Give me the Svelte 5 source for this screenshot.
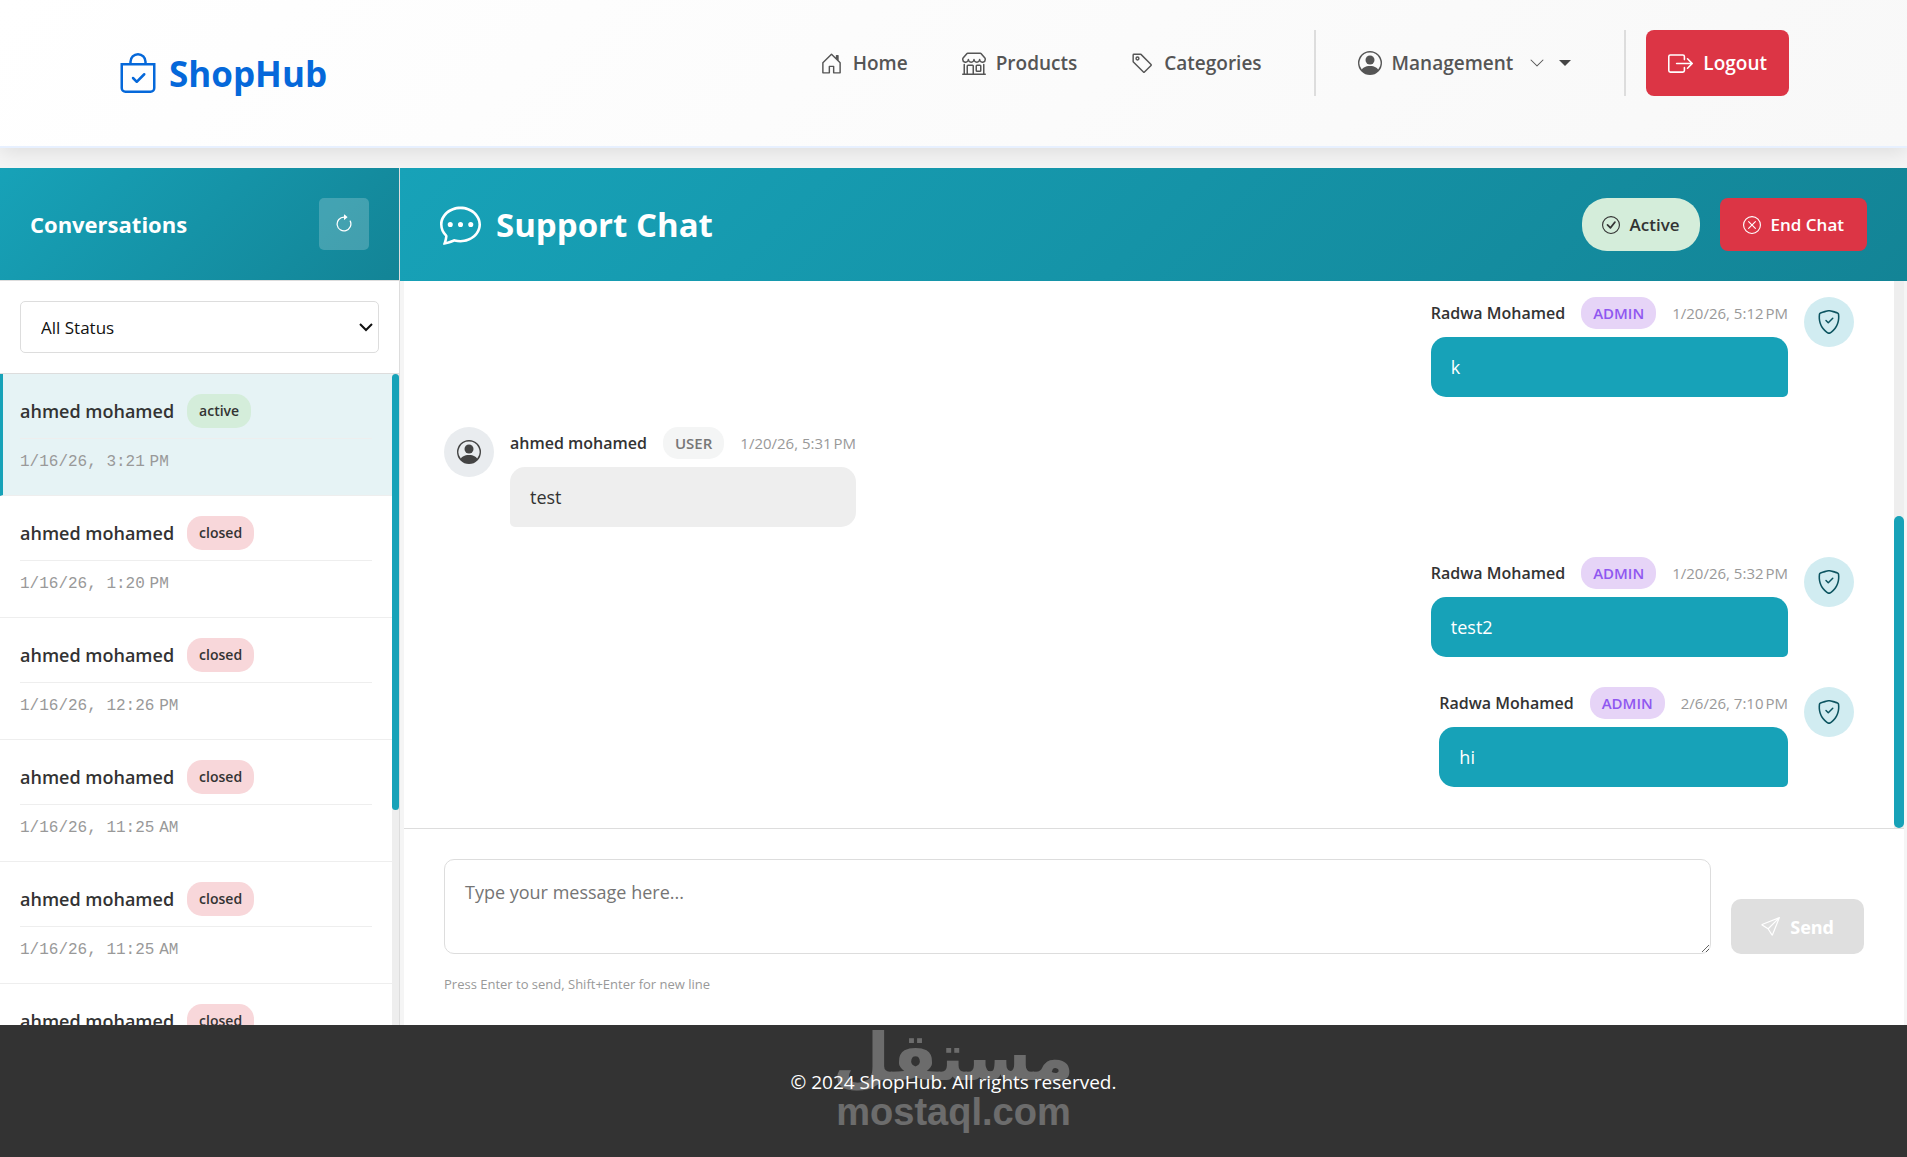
<script lang="ts">
	type Status = 'active' | 'closed';
	type Conversation = { id: number; name: string; status: Status; date: string };
	type Message = {
		id: number;
		author: string;
		role: 'admin' | 'user';
		date: string;
		text: string;
	};

	const icons: Record<string, string[]> = {
		bag: [
			'M10.854 8.146a.5.5 0 0 1 0 .708l-3 3a.5.5 0 0 1-.708 0l-1.5-1.5a.5.5 0 1 1 .708-.708L7.5 10.793l2.646-2.647a.5.5 0 0 1 .708 0',
			'M8 1a2.5 2.5 0 0 1 2.5 2.5V4h-5v-.5A2.5 2.5 0 0 1 8 1m3.5 3v-.5a3.5 3.5 0 1 0-7 0V4H1v10a2 2 0 0 0 2 2h10a2 2 0 0 0 2-2V4zM2 5h12v9a1 1 0 0 1-1 1H3a1 1 0 0 1-1-1z'
		],
		house: [
			'M8.354 1.146a.5.5 0 0 0-.708 0l-6 6A.5.5 0 0 0 1.5 7.5v7a.5.5 0 0 0 .5.5h4.5a.5.5 0 0 0 .5-.5v-4h2v4a.5.5 0 0 0 .5.5H14a.5.5 0 0 0 .5-.5v-7a.5.5 0 0 0-.146-.354L13 5.793V2.5a.5.5 0 0 0-.5-.5h-1a.5.5 0 0 0-.5.5v1.293zM2.5 14V7.707l5.5-5.5 5.5 5.5V14H10v-4a.5.5 0 0 0-.5-.5h-3a.5.5 0 0 0-.5.5v4z'
		],
		shop: [
			'M2.97 1.35A1 1 0 0 1 3.73 1h8.54a1 1 0 0 1 .76.35l2.609 3.044A1.5 1.5 0 0 1 16 5.37v.255a2.375 2.375 0 0 1-4.25 1.458A2.37 2.37 0 0 1 9.875 8 2.37 2.37 0 0 1 8 7.083 2.37 2.37 0 0 1 6.125 8a2.37 2.37 0 0 1-1.875-.917A2.375 2.375 0 0 1 0 5.625V5.37a1.5 1.5 0 0 1 .361-.976zm1.78 4.275a1.375 1.375 0 0 0 2.75 0 .5.5 0 0 1 1 0 1.375 1.375 0 0 0 2.75 0 .5.5 0 0 1 1 0 1.375 1.375 0 1 0 2.75 0V5.37a.5.5 0 0 0-.12-.325L12.27 2H3.73L1.12 5.045A.5.5 0 0 0 1 5.37v.255a1.375 1.375 0 0 0 2.75 0 .5.5 0 0 1 1 0M1.5 8.5A.5.5 0 0 1 2 9v6h1v-5a1 1 0 0 1 1-1h3a1 1 0 0 1 1 1v5h6V9a.5.5 0 0 1 1 0v6h.5a.5.5 0 0 1 0 1H.5a.5.5 0 0 1 0-1H1V9a.5.5 0 0 1 .5-.5M4 15h3v-5H4zm5-5a1 1 0 0 1 1-1h2a1 1 0 0 1 1 1v3a1 1 0 0 1-1 1h-2a1 1 0 0 1-1-1zm3 0h-2v3h2z'
		],
		tag: [
			'M6 4.5a1.5 1.5 0 1 1-3 0 1.5 1.5 0 0 1 3 0m-1 0a.5.5 0 1 0-1 0 .5.5 0 0 0 1 0',
			'M2 1h4.586a1 1 0 0 1 .707.293l7 7a1 1 0 0 1 0 1.414l-4.586 4.586a1 1 0 0 1-1.414 0l-7-7A1 1 0 0 1 1 6.586V2a1 1 0 0 1 1-1m0 5.586 7 7L13.586 9l-7-7H2z'
		],
		person: [
			'M11 6a3 3 0 1 1-6 0 3 3 0 0 1 6 0',
			'M0 8a8 8 0 1 1 16 0A8 8 0 0 1 0 8m8-7a7 7 0 0 0-5.468 11.37C3.242 11.226 4.805 10 8 10s4.757 1.225 5.468 2.37A7 7 0 0 0 8 1'
		],
		chevron: [
			'M1.646 4.646a.5.5 0 0 1 .708 0L8 10.293l5.646-5.647a.5.5 0 0 1 .708.708l-6 6a.5.5 0 0 1-.708 0l-6-6a.5.5 0 0 1 0-.708'
		],
		logout: [
			'M10 12.5a.5.5 0 0 1-.5.5h-8a.5.5 0 0 1-.5-.5v-9a.5.5 0 0 1 .5-.5h8a.5.5 0 0 1 .5.5v2a.5.5 0 0 0 1 0v-2A1.5 1.5 0 0 0 9.5 2h-8A1.5 1.5 0 0 0 0 3.5v9A1.5 1.5 0 0 0 1.5 14h8a1.5 1.5 0 0 0 1.5-1.5v-2a.5.5 0 0 0-1 0z',
			'M15.854 8.354a.5.5 0 0 0 0-.708l-3-3a.5.5 0 0 0-.708.708L14.293 7.5H5.5a.5.5 0 0 0 0 1h8.793l-2.147 2.146a.5.5 0 0 0 .708.708z'
		],
		check: [
			'M8 15A7 7 0 1 1 8 1a7 7 0 0 1 0 14m0 1A8 8 0 1 0 8 0a8 8 0 0 0 0 16',
			'm10.97 4.97-.02.022-3.473 4.425-2.093-2.094a.75.75 0 0 0-1.06 1.06L6.97 11.03a.75.75 0 0 0 1.079-.02l3.992-4.99a.75.75 0 0 0-1.071-1.05'
		],
		cross: [
			'M8 15A7 7 0 1 1 8 1a7 7 0 0 1 0 14m0 1A8 8 0 1 0 8 0a8 8 0 0 0 0 16',
			'M4.646 4.646a.5.5 0 0 1 .708 0L8 7.293l2.646-2.647a.5.5 0 0 1 .708.708L8.707 8l2.647 2.646a.5.5 0 0 1-.708.708L8 8.707l-2.646 2.647a.5.5 0 0 1-.708-.708L7.293 8 4.646 5.354a.5.5 0 0 1 0-.708'
		],
		refresh: [
			'M8 3a5 5 0 1 0 4.546 2.914.5.5 0 0 1 .908-.417A6 6 0 1 1 8 2z',
			'M8 4.466V.534a.25.25 0 0 1 .41-.192l2.36 1.966c.12.1.12.284 0 .384L8.41 4.658A.25.25 0 0 1 8 4.466'
		],
		chat: [
			'M5 8a1 1 0 1 1-2 0 1 1 0 0 1 2 0m4 0a1 1 0 1 1-2 0 1 1 0 0 1 2 0m3 1a1 1 0 1 0 0-2 1 1 0 0 0 0 2',
			'm2.165 15.803.02-.004c1.83-.363 2.948-.842 3.468-1.105A9 9 0 0 0 8 15c4.418 0 8-3.134 8-7s-3.582-7-8-7-8 3.134-8 7c0 1.76.743 3.37 1.97 4.6a10.4 10.4 0 0 1-.524 2.318l-.003.011a11 11 0 0 1-.244.637c-.079.186.074.394.273.362a22 22 0 0 0 .693-.125m.8-3.108a1 1 0 0 0-.287-.801C1.618 10.83 1 9.468 1 8c0-3.192 3.004-6 7-6s7 2.808 7 6-3.004 6-7 6a8 8 0 0 1-2.088-.272 1 1 0 0 0-.711.074c-.387.196-1.24.57-2.634.893a11 11 0 0 0 .398-2'
		],
		shield: [
			'M5.338 1.59a61 61 0 0 0-2.837.856.48.48 0 0 0-.328.39c-.554 4.157.726 7.19 2.253 9.188a10.7 10.7 0 0 0 2.287 2.233c.346.244.652.42.893.533q.18.085.293.118a1 1 0 0 0 .101.025 1 1 0 0 0 .1-.025q.114-.034.294-.118c.24-.113.547-.29.893-.533a10.7 10.7 0 0 0 2.287-2.233c1.527-1.997 2.807-5.031 2.253-9.188a.48.48 0 0 0-.328-.39c-.651-.213-1.75-.56-2.837-.855C9.552 1.29 8.531 1.067 8 1.067c-.53 0-1.552.223-2.662.524zM5.072.56C6.157.265 7.31 0 8 0s1.843.265 2.928.56c1.11.3 2.229.655 2.887.87a1.54 1.54 0 0 1 1.044 1.262c.596 4.477-.787 7.795-2.465 9.99a11.8 11.8 0 0 1-2.517 2.453 7 7 0 0 1-1.048.625c-.28.132-.581.24-.829.24s-.548-.108-.829-.24a7 7 0 0 1-1.048-.625 11.8 11.8 0 0 1-2.517-2.453C1.928 10.487.545 7.169 1.141 2.692A1.54 1.54 0 0 1 2.185 1.43 63 63 0 0 1 5.072.56',
			'M10.854 5.146a.5.5 0 0 1 0 .708l-3 3a.5.5 0 0 1-.708 0l-1.5-1.5a.5.5 0 1 1 .708-.708L7.5 7.793l2.646-2.647a.5.5 0 0 1 .708 0'
		],
		send: [
			'M15.854.146a.5.5 0 0 1 .11.54l-5.819 14.547a.75.75 0 0 1-1.329.124l-3.178-4.995L.643 7.184a.75.75 0 0 1 .124-1.33L15.314.037a.5.5 0 0 1 .54.11ZM6.636 10.07l2.761 4.338L14.13 2.576zm6.787-8.201L1.591 6.602l4.339 2.76z'
		]
	};

	const links = [
		{ label: 'Home', href: '#home', icon: 'house', size: 23 },
		{ label: 'Products', href: '#products', icon: 'shop', size: 24 },
		{ label: 'Categories', href: '#categories', icon: 'tag', size: 23 }
	];

	const conversations: Conversation[] = [
		{ id: 1, name: 'ahmed mohamed', status: 'active', date: '1/16/26, 3:21\u202fPM' },
		{ id: 2, name: 'ahmed mohamed', status: 'closed', date: '1/16/26, 1:20\u202fPM' },
		{ id: 3, name: 'ahmed mohamed', status: 'closed', date: '1/16/26, 12:26\u202fPM' },
		{ id: 4, name: 'ahmed mohamed', status: 'closed', date: '1/16/26, 11:25\u202fAM' },
		{ id: 5, name: 'ahmed mohamed', status: 'closed', date: '1/16/26, 11:25\u202fAM' },
		{ id: 6, name: 'ahmed mohamed', status: 'closed', date: '1/16/26, 11:24\u202fAM' }
	];

	const messages: Message[] = [
		{ id: 1, author: 'Radwa Mohamed', role: 'admin', date: '1/20/26, 5:12\u202fPM', text: 'k' },
		{ id: 2, author: 'ahmed mohamed', role: 'user', date: '1/20/26, 5:31\u202fPM', text: 'test' },
		{ id: 3, author: 'Radwa Mohamed', role: 'admin', date: '1/20/26, 5:32\u202fPM', text: 'test2' },
		{ id: 4, author: 'Radwa Mohamed', role: 'admin', date: '2/6/26, 7:10\u202fPM', text: 'hi' }
	];

	let selectedId = 1;
	let filter = 'all';
	let draft = '';

	$: shown = conversations.filter((c) => filter == 'all' || c.status == filter);
</script>

{#snippet icon(name: string, size: number)}
	<svg width={size} height={size} viewBox="0 0 16 16" fill="currentColor" aria-hidden="true">
		{#each icons[name] as d}
			<path {d} fill-rule={name == 'person' ? 'evenodd' : 'nonzero'} />
		{/each}
	</svg>
{/snippet}

<header class="topbar">
	<a class="brand" href="#home">
		{@render icon('bag', 40)}
		<span>ShopHub</span>
	</a>
	<nav>
		<div class="links">
			{#each links as link}
				<a class="link" href={link.href}>
					{@render icon(link.icon, link.size)}
					{link.label}
				</a>
			{/each}
		</div>
		<div class="account">
			<button class="link" type="button">
				{@render icon('person', 24)}
				Management
				<span class="chevron">{@render icon('chevron', 16)}</span>
				<span class="caret"></span>
			</button>
		</div>
		<button class="logout" type="button">
			{@render icon('logout', 25)}
			Logout
		</button>
	</nav>
</header>

<main>
	<aside>
		<div class="sideHead">
			<h2>Conversations</h2>
			<button class="refresh" type="button" aria-label="Refresh">
				{@render icon('refresh', 20)}
			</button>
		</div>
		<div class="filter">
			<select bind:value={filter} aria-label="Status">
				<option value="all">All Status</option>
				<option value="active">Active</option>
				<option value="closed">Closed</option>
			</select>
			<svg class="arrow" width="14" height="9" viewBox="0 0 14 9" aria-hidden="true">
				<path d="M1 1l6 6 6-6" fill="none" stroke="#111" stroke-width="2" />
			</svg>
		</div>
		<div class="scroller">
			<ul class="conversations">
				{#each shown as conversation (conversation.id)}
					<li>
						<button
							class="conversation"
							class:selected={conversation.id == selectedId}
							type="button"
							on:click={() => (selectedId = conversation.id)}
						>
							<span class="who">
								<span class="name">{conversation.name}</span>
								<span class="status {conversation.status}">{conversation.status}</span>
							</span>
							<span class="date">{conversation.date}</span>
						</button>
					</li>
				{/each}
			</ul>
			<div class="track">
				<div class="thumb sideThumb"></div>
			</div>
		</div>
	</aside>

	<section class="chat">
		<div class="chatHead">
			<h1>
				{@render icon('chat', 41)}
				Support Chat
			</h1>
			<div class="actions">
				<span class="state">
					{@render icon('check', 18)}
					Active
				</span>
				<button class="endChat" type="button">
					{@render icon('cross', 18)}
					End Chat
				</button>
			</div>
		</div>
		<div class="chatBody">
			<div class="scroller">
				<div class="messages">
					{#each messages as message (message.id)}
						<article class="message {message.role}">
							<div class="avatar">
								{@render icon(message.role == 'admin' ? 'shield' : 'person', 24)}
							</div>
							<div class="content">
								<div class="meta">
									<span class="author">{message.author}</span>
									<span class="role">{message.role.toUpperCase()}</span>
									<time>{message.date}</time>
								</div>
								<p class="bubble">{message.text}</p>
							</div>
						</article>
					{/each}
				</div>
				<div class="track wide">
					<div class="thumb chatThumb"></div>
				</div>
			</div>
			<form class="composer" on:submit|preventDefault={() => (draft = '')}>
				<div class="inputRow">
					<textarea
						bind:value={draft}
						placeholder="Type your message here..."
						aria-label="Message"
					></textarea>
					<button class="send" type="submit" disabled={!draft.trim()}>
						{@render icon('send', 19)}
						Send
					</button>
				</div>
				<small>Press Enter to send, Shift+Enter for new line</small>
			</form>
		</div>
	</section>
</main>

<footer>
	<p>© 2024 ShopHub. All rights reserved.</p>
	<div class="watermark">
		<span class="arabic" lang="ar">مستقل</span>
		<span class="latin">mostaql.com</span>
	</div>
</footer>

<style>
	:global(body) {
		background-color: #f5f5f5;
		font-family: 'Open Sans', 'Noto Sans', sans-serif;
		font-size: 18px;
		color: #333;
	}
	button,
	select,
	textarea {
		font-family: inherit;
		font-size: inherit;
		box-sizing: border-box;
	}
	button {
		border: none;
		cursor: pointer;
		padding: 0;
	}
	a {
		text-decoration: none;
	}
	h1,
	h2,
	p,
	ul {
		margin: 0;
		padding: 0;
	}
	svg {
		flex: none;
		display: block;
	}

	.topbar {
		display: flex;
		justify-content: space-between;
		height: 146px;
		padding: 0 118px;
		background: linear-gradient(135deg, #ffffff 0%, #f8f8f8 100%);
		border-bottom: 2px solid #e7f0ff;
		box-shadow: 0 4px 20px rgba(0, 0, 0, 0.1);
		margin-bottom: 20px;
	}
	.brand {
		display: flex;
		align-items: center;
		gap: 11px;
		color: #0568da;
		font-size: 35px;
		font-weight: 700;
	}
	nav {
		display: flex;
		height: 66px;
		margin-top: 30px;
	}
	.links {
		display: flex;
		gap: 10px;
	}
	.link {
		display: flex;
		align-items: center;
		gap: 10px;
		padding: 0 22px;
		background: none;
		color: #555;
		font-size: 19px;
		font-weight: 600;
	}
	.account {
		display: flex;
		margin-left: 30px;
		margin-right: 20px;
		padding: 0 31px 0 20px;
		border-left: 2px solid #ddd;
		border-right: 2px solid #ddd;
	}
	.chevron {
		padding-left: 6px;
	}
	.caret {
		margin-left: 4px;
		border-top: 6px solid #444;
		border-left: 6px solid transparent;
		border-right: 6px solid transparent;
	}
	.logout {
		display: flex;
		align-items: center;
		gap: 10px;
		padding: 0 22px;
		border-radius: 8px;
		background-color: #dc3545;
		color: #fff;
		font-size: 19px;
		font-weight: 600;
	}

	main {
		display: grid;
		grid-template-columns: 400px 1fr;
		height: calc(100vh - 300px);
		overflow: hidden;
	}
	aside {
		display: flex;
		flex-direction: column;
		min-height: 0;
		background-color: #fff;
		border-right: 1px solid #ddd;
	}
	.sideHead,
	.chatHead {
		display: flex;
		align-items: center;
		justify-content: space-between;
		flex: none;
		box-sizing: border-box;
		height: 113px;
		background: linear-gradient(135deg, #17a2b8 0%, #138496 100%);
		color: #fff;
	}
	.sideHead {
		padding: 0 30px;
		border-bottom: 1px solid #ddd;
	}
	h2 {
		font-size: 22px;
		font-weight: 700;
	}
	.refresh {
		display: flex;
		align-items: center;
		justify-content: center;
		width: 50px;
		height: 52px;
		border-radius: 5px;
		background-color: rgba(255, 255, 255, 0.2);
		color: #fff;
	}
	.filter {
		display: grid;
		align-items: center;
		padding: 20px;
		border-bottom: 1px solid #ddd;
	}
	select,
	.arrow {
		grid-area: 1 / 1;
	}
	select {
		appearance: none;
		width: 100%;
		height: 52px;
		padding: 0 20px;
		border: 1px solid #ddd;
		border-radius: 5px;
		background-color: #fff;
		color: #111;
		font-size: 17px;
	}
	.arrow {
		justify-self: end;
		margin-right: 6px;
		pointer-events: none;
	}

	.scroller {
		display: flex;
		flex: 1;
		min-height: 0;
		overflow: hidden;
	}
	.track {
		flex: none;
		width: 7px;
		background-color: #eee;
	}
	.track.wide {
		display: flex;
		flex-direction: column;
		justify-content: flex-end;
		width: 10px;
	}
	.thumb {
		border-radius: 5px;
		background-color: #17a2b8;
	}
	.sideThumb {
		height: 67%;
	}
	.chatThumb {
		height: 57%;
	}

	.conversations {
		flex: 1;
		list-style: none;
	}
	.conversation {
		display: block;
		width: 100%;
		padding: 20px;
		border-bottom: 1px solid #eee;
		background-color: #fff;
		text-align: left;
	}
	.conversation.selected {
		padding-left: 17px;
		border-left: 3px solid #17a2b8;
		background-color: #e6f3f5;
	}
	.who {
		display: flex;
		align-items: center;
		gap: 13px;
		height: 34px;
		padding-bottom: 10px;
		border-bottom: 1px solid #eee;
	}
	.name {
		color: #333;
		font-size: 18px;
		font-weight: 600;
	}
	.status {
		padding: 0 12px;
		border-radius: 15px;
		color: #333;
		font-size: 14px;
		font-weight: 600;
		line-height: 34px;
	}
	.status.active {
		background-color: #d4edda;
	}
	.status.closed {
		background-color: #f8d7da;
	}
	.date {
		display: block;
		padding-top: 10px;
		color: #999;
		font-family: 'Liberation Mono', monospace;
		font-size: 16px;
		line-height: 26px;
	}

	.chat {
		display: flex;
		flex-direction: column;
		min-width: 0;
		min-height: 0;
	}
	.chatHead {
		padding: 0 40px;
	}
	h1 {
		display: flex;
		align-items: center;
		gap: 15px;
		font-size: 33px;
		font-weight: 700;
	}
	.actions {
		display: flex;
		gap: 20px;
	}
	.state,
	.endChat {
		display: flex;
		align-items: center;
		gap: 10px;
		height: 53px;
		font-size: 17px;
		font-weight: 600;
	}
	.state {
		padding: 0 20px;
		border-radius: 25px;
		background-color: #d4edda;
		color: #333;
	}
	.endChat {
		padding: 0 23px;
		border-radius: 8px;
		background-color: #dc3545;
		color: #fff;
	}
	.chatBody {
		display: flex;
		flex-direction: column;
		flex: 1;
		min-height: 0;
		margin: 0 3px 0 4px;
		background-color: #fff;
	}
	.messages {
		display: flex;
		flex-direction: column;
		justify-content: flex-end;
		flex: 1;
		gap: 30px;
		padding: 0 40px 41px;
	}
	.message {
		display: flex;
		gap: 16px;
	}
	.message.admin {
		flex-direction: row-reverse;
	}
	.avatar {
		display: flex;
		align-items: center;
		justify-content: center;
		flex: none;
		width: 50px;
		height: 50px;
		border-radius: 50%;
		background-color: #e9ecef;
		color: #444;
	}
	.admin .avatar {
		background-color: #d1ecf1;
		color: #0c5460;
	}
	.meta {
		display: flex;
		align-items: center;
		gap: 16px;
		height: 32px;
		margin-bottom: 8px;
	}
	.author {
		color: #333;
		font-size: 16px;
		font-weight: 600;
	}
	.role {
		padding: 0 12px;
		border-radius: 15px;
		background-color: #f4f5f5;
		color: #777;
		font-size: 15px;
		font-weight: 600;
		line-height: 32px;
	}
	.admin .role {
		background-color: #e6d4f7;
		color: #8f57f0;
	}
	time {
		color: #999;
		font-size: 15px;
	}
	.bubble {
		padding: 17px 20px;
		border-radius: 15px 15px 15px 5px;
		background-color: #eee;
		color: #333;
		line-height: 26px;
	}
	.admin .bubble {
		border-radius: 15px 15px 5px 15px;
		background-color: #17a2b8;
		color: #fff;
	}

	.composer {
		padding: 30px 40px;
		border-top: 1px solid #ddd;
	}
	.inputRow {
		display: flex;
		align-items: flex-end;
		gap: 20px;
		margin-bottom: 20px;
	}
	textarea {
		flex: 1;
		height: 95px;
		padding: 19px 20px;
		border: 1px solid #ddd;
		border-radius: 10px;
		line-height: 26px;
		resize: vertical;
	}
	textarea::placeholder {
		color: #757575;
	}
	.send {
		display: flex;
		align-items: center;
		gap: 10px;
		height: 55px;
		padding: 0 30px;
		border-radius: 10px;
		background-color: #17a2b8;
		color: #fff;
		font-weight: 700;
	}
	.send:disabled {
		background-color: #dfdfdf;
	}
	small {
		display: block;
		color: #999;
		font-size: 13px;
		line-height: 21px;
	}

	footer {
		position: relative;
		padding: 44px 0 62px;
		background-color: #333;
		color: #fff;
		text-align: center;
	}
	footer p {
		font-size: 19px;
		line-height: 26px;
	}
	.watermark {
		position: absolute;
		inset: 0;
		display: flex;
		flex-direction: column;
		align-items: center;
		opacity: 0.28;
		font-weight: 700;
		pointer-events: none;
	}
	.arabic {
		font-family: 'DejaVu Sans', sans-serif;
		font-size: 66px;
		line-height: 66px;
	}
	.latin {
		font-family: 'Liberation Sans', sans-serif;
		font-size: 38px;
		line-height: 42px;
	}
</style>
